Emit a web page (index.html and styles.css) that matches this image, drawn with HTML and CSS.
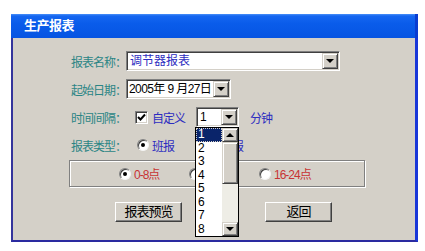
FILE: index.html
```html
<!DOCTYPE html>
<html>
	<head>
		<meta charset="UTF-8">
		<title>生产报表</title>
		<link rel="stylesheet" href="styles.css">
	</head>
	<body>
		<div class="window">
			<div class="titlebar">生产报表</div>
			<div class="client">
				<div class="row">
					<span class="label">报表名称：</span>
					<div class="select name-select"><span class="value blue">调节器报表</span><span class="arrow"></span></div>
				</div>
				<div class="row">
					<span class="label">起始日期：</span>
					<div class="select date-select"><span class="value">2005年 9 月27日</span><span class="arrow"></span></div>
				</div>
				<div class="row">
					<span class="label">时间间隔：</span>
					<span class="check"><svg width="9" height="9" viewBox="0 0 9 9"><path d="M1 4 L3.5 6.5 L8 1.5" fill="none" stroke="#000" stroke-width="2"/></svg></span>
					<span class="text blue">自定义</span>
					<div class="select min-select"><span class="value">1</span><span class="arrow"></span></div>
					<span class="text blue unit">分钟</span>
				</div>
				<div class="row">
					<span class="label">报表类型：</span>
					<span class="radio on type-first"></span>
					<span class="text blue">班报</span>
					<span class="radio type-second"></span>
					<span class="text blue">日报</span>
				</div>
				<div class="group">
					<div class="option"><span class="radio on"></span><span class="text red">0-8点</span></div>
					<div class="option"><span class="radio"></span><span class="text red">8-16点</span></div>
					<div class="option"><span class="radio"></span><span class="text red">16-24点</span></div>
				</div>
				<div class="buttons">
					<div class="btn">报表预览</div>
					<div class="btn">返回</div>
				</div>
			</div>
			<div class="droplist">
				<ul>
					<li class="sel">1</li>
					<li>2</li>
					<li>3</li>
					<li>4</li>
					<li>5</li>
					<li>6</li>
					<li>7</li>
					<li>8</li>
				</ul>
				<div class="scroll">
					<span class="sbtn up"></span>
					<span class="thumb"></span>
					<span class="track"></span>
					<span class="sbtn down"></span>
				</div>
			</div>
		</div>
	</body>
</html>
```

FILE: styles.css
```css
* {
	box-sizing: border-box;
}
body {
	margin: 0;
	background: #fff;
	font: 12px "Liberation Sans", "Noto Sans CJK SC", sans-serif;
}
ul {
	margin: 0;
	padding: 0;
	list-style: none;
}
.window {
	position: relative;
	width: 407px;
	margin: 14px 0 0 11px;
}
.titlebar {
	height: 24px;
	line-height: 24px;
	padding-left: 13px;
	color: #fff;
	font-weight: bold;
	font-size: 13px;
	letter-spacing: -0.5px;
	background: linear-gradient(#4a90f8 0, #1566f0 2px, #0a5cea 40%, #0654e2 100%);
	border-right: 3px solid #0a3cd0;
}
.client {
	height: 204px;
	padding: 13px 0 0 58px;
	background: #d4d0c8;
	border-style: solid;
	border-width: 0 3px 2px 2px;
	border-color: #3030a0 #1836d8 #2a2aa0 #34349c;
}
.row {
	display: flex;
	align-items: center;
	height: 20px;
	margin-bottom: 8px;
}
.label {
	flex: none;
	width: 55px;
	color: #2b8585;
	letter-spacing: -1px;
	white-space: nowrap;
}
.text {
	white-space: nowrap;
	letter-spacing: -1px;
}
.blue {
	color: #2d2dc0;
}
.red {
	color: #c83434;
}
.select {
	display: flex;
	height: 20px;
	padding: 1px;
	background: #fff;
	border: 1px solid;
	border-color: #808080 #fff #fff #808080;
	box-shadow: inset 1px 1px #404040, inset -1px -1px #d4d0c8;
}
.name-select {
	width: 214px;
}
.date-select {
	width: 105px;
}
.min-select {
	width: 43px;
	margin-left: 11px;
}
.value {
	flex: 1;
	padding-left: 2px;
	line-height: 16px;
	white-space: nowrap;
	overflow: hidden;
}
.date-select .value {
	padding-left: 1px;
	letter-spacing: -0.6px;
}
.arrow,
.sbtn {
	display: flex;
	align-items: center;
	justify-content: center;
	width: 16px;
	height: 16px;
	background: #d4d0c8;
	border: 1px solid;
	border-color: #d4d0c8 #404040 #404040 #d4d0c8;
	box-shadow: inset 1px 1px #fff, inset -1px -1px #808080;
}
.arrow::after,
.down::after {
	content: "";
	border: 4px solid transparent;
	border-top-color: #000;
	border-bottom: 0;
}
.up::after {
	content: "";
	border: 4px solid transparent;
	border-bottom-color: #000;
	border-top: 0;
}
.check {
	display: flex;
	align-items: center;
	justify-content: center;
	width: 13px;
	height: 13px;
	margin: 0 4px 0 9px;
	background: #fff;
	border: 1px solid;
	border-color: #808080 #fff #fff #808080;
	box-shadow: inset 1px 1px #404040, inset -1px -1px #d4d0c8;
}
.unit {
	margin-left: 11px;
}
.radio {
	display: flex;
	align-items: center;
	justify-content: center;
	flex: none;
	width: 12px;
	height: 12px;
	margin-right: 3px;
	background: #fff;
	border-radius: 50%;
	border: 1px solid;
	border-color: #808080 #f4f4f4 #f4f4f4 #808080;
	box-shadow: inset 1px 1px #404040;
}
.radio.on::after {
	content: "";
	width: 4px;
	height: 4px;
	border-radius: 50%;
	background: #000;
}
.type-first {
	margin-left: 11px;
}
.type-second {
	margin-left: 32px;
}
.group {
	display: flex;
	align-items: center;
	width: 296px;
	height: 27px;
	margin: -3px 0 0 -2px;
	padding-left: 49px;
	border: 1px solid #808080;
	box-shadow: inset 1px 1px #fff, 1px 1px #fff;
}
.option {
	display: flex;
	align-items: center;
	width: 70px;
}
.buttons {
	display: flex;
	gap: 83px;
	margin: 15px 0 0 44px;
}
.btn {
	width: 67px;
	height: 20px;
	line-height: 18px;
	text-align: center;
	font-size: 13px;
	letter-spacing: -1px;
	background: #d4d0c8;
	border: 1px solid;
	border-color: #fff #404040 #404040 #fff;
	box-shadow: inset -1px -1px #808080;
}
.droplist {
	position: absolute;
	left: 184px;
	top: 113px;
	display: flex;
	width: 44px;
	height: 110px;
	background: #fff;
	border: 1px solid #000;
}
.droplist ul {
	flex: 1;
}
.droplist li {
	height: 13.5px;
	line-height: 13.5px;
	padding-left: 2px;
}
.droplist li.sel {
	color: #fff;
	background: #0a246a;
	outline: 1px dotted #d4d0c8;
	outline-offset: -1px;
}
.scroll {
	display: flex;
	flex-direction: column;
	width: 16px;
	background: #eeede6;
}
.sbtn {
	height: 14px;
}
.thumb {
	height: 42px;
	background: #d4d0c8;
	border: 1px solid;
	border-color: #d4d0c8 #404040 #404040 #d4d0c8;
	box-shadow: inset 1px 1px #fff, inset -1px -1px #808080;
}
.track {
	flex: 1;
}
```
